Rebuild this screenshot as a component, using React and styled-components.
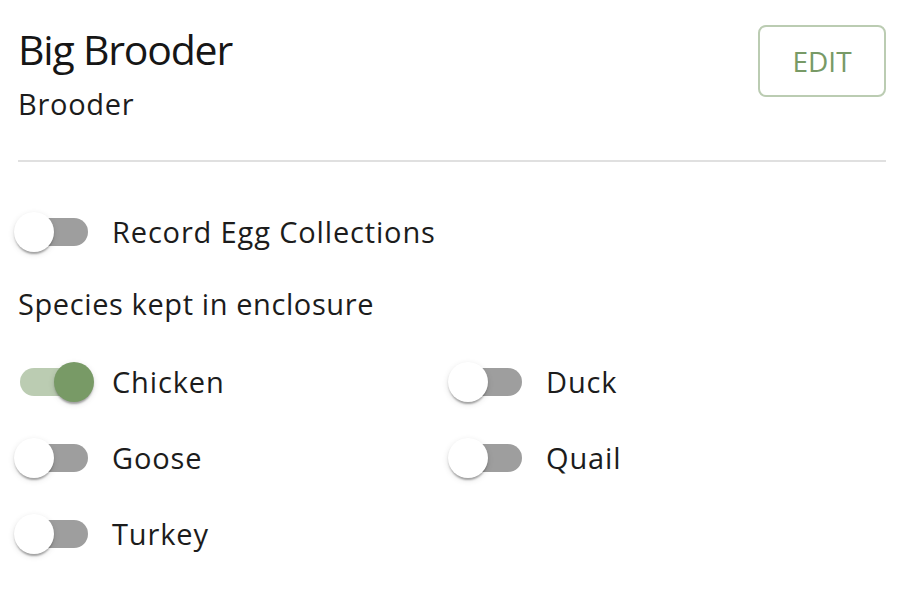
import React, { useState } from "react";
import styled, { createGlobalStyle } from "styled-components";

const GlobalStyle = createGlobalStyle`
  html, body { margin: 0; padding: 0; background: #ffffff; }
  body { font-family: "Open Sans", "Noto Sans", sans-serif; color: #1c1c1c; }
  * { box-sizing: border-box; }
`;

const Page = styled.div`
  padding: 24px 28px 0 18px;
`;

const Header = styled.div`
  display: flex;
  justify-content: space-between;
  align-items: flex-start;
`;

const TitleBlock = styled.div`
  display: flex;
  flex-direction: column;
  gap: 13px;
`;

const Title = styled.h1`
  margin: 0;
  font-size: 41px;
  line-height: 50px;
  font-weight: 500;
  letter-spacing: -1.2px;
  color: #161616;
`;

const Subtitle = styled.div`
  font-size: 29px;
  line-height: 34px;
  letter-spacing: 0.7px;
`;

const EditButton = styled.button`
  margin-top: 1px;
  width: 128px;
  height: 72px;
  border: 2px solid rgba(120, 154, 102, 0.5);
  border-radius: 8px;
  background: transparent;
  color: #789a66;
  font-family: "Open Sans", "Noto Sans", sans-serif;
  font-size: 28px;
  font-weight: 400;
  letter-spacing: 0;
  text-transform: uppercase;
  cursor: pointer;
`;

const Divider = styled.hr`
  margin: 39px 0 0 0;
  border: none;
  height: 2px;
  background: #e0e0e0;
`;

const ToggleLabel = styled.label`
  display: inline-flex;
  align-items: center;
  margin-left: -22px;
  height: 76px;
  cursor: pointer;
`;

const SwitchRoot = styled.span`
  position: relative;
  display: inline-flex;
  flex-shrink: 0;
  width: 116px;
  height: 76px;
  padding: 24px;
`;

const Track = styled.span`
  width: 100%;
  height: 100%;
  border-radius: 14px;
  background: ${(p) => (p.$on ? "rgba(120,154,102,0.5)" : "#9e9e9e")};
`;

const Thumb = styled.span`
  position: absolute;
  top: 18px;
  left: 18px;
  width: 40px;
  height: 40px;
  border-radius: 50%;
  background: ${(p) => (p.$on ? "#789a66" : "#ffffff")};
  transform: translateX(${(p) => (p.$on ? "40px" : "0")});
  box-shadow: 0 4px 2px -2px rgba(0,0,0,0.2), 0 2px 2px 0 rgba(0,0,0,0.14), 0 2px 6px 0 rgba(0,0,0,0.12);
`;

const LabelText = styled.span`
  font-size: 29px;
  line-height: 42px;
  letter-spacing: 0.85px;
`;

const FirstToggle = styled.div`
  margin-top: 32px;
`;

const SectionLabel = styled.div`
  margin-top: 13px;
  font-size: 29px;
  line-height: 42px;
  letter-spacing: 0.6px;
`;

const SpeciesGrid = styled.div`
  margin-top: 19px;
  display: grid;
  grid-template-columns: 1fr 1fr;
`;

function Toggle({ label, on, onChange }) {
  return (
    <ToggleLabel onClick={onChange}>
      <SwitchRoot>
        <Track $on={on} />
        <Thumb $on={on} />
      </SwitchRoot>
      <LabelText>{label}</LabelText>
    </ToggleLabel>
  );
}

export default function App() {
  const [eggs, setEggs] = useState(false);
  const [species, setSpecies] = useState({
    Chicken: true,
    Duck: false,
    Goose: false,
    Quail: false,
    Turkey: false,
  });
  const flip = (k) => setSpecies((s) => ({ ...s, [k]: !s[k] }));

  return (
    <>
      <GlobalStyle />
      <Page>
        <Header>
          <TitleBlock>
            <Title>Big Brooder</Title>
            <Subtitle>Brooder</Subtitle>
          </TitleBlock>
          <EditButton>Edit</EditButton>
        </Header>
        <Divider />
        <FirstToggle>
          <Toggle label="Record Egg Collections" on={eggs} onChange={() => setEggs(!eggs)} />
        </FirstToggle>
        <SectionLabel>Species kept in enclosure</SectionLabel>
        <SpeciesGrid>
          {Object.keys(species).map((k) => (
            <div key={k}>
              <Toggle label={k} on={species[k]} onChange={() => flip(k)} />
            </div>
          ))}
        </SpeciesGrid>
      </Page>
    </>
  );
}
